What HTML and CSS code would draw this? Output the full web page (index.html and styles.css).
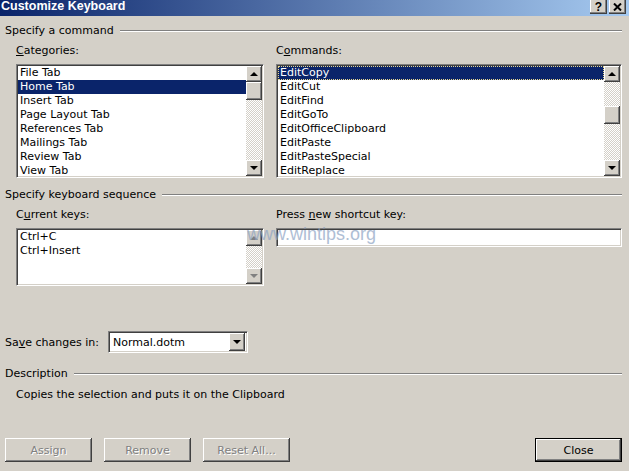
FILE: index.html
```html
<!DOCTYPE html>
<html lang="en">
<head>
    <meta charset="UTF-8">
    <title>Customize Keyboard</title>
    <link rel="stylesheet" href="styles.css">
</head>
<body>
    <div class="dialog">
        <div class="titlebar">
            <span class="title">Customize Keyboard</span>
            <div class="title-btns">
                <span class="tbtn help">?</span>
                <span class="tbtn">
                    <svg width="9" height="8" viewBox="0 0 9 8"><path d="M1 0.5 L8 7.5 M8 0.5 L1 7.5" stroke="#000" stroke-width="2"/></svg>
                </span>
            </div>
        </div>

        <div class="content">
            <div class="group-head"><span>Specify a command</span><i class="etch"></i></div>
            <div class="pair">
                <div class="col left">
                    <div class="label"><u>C</u>ategories:</div>
                    <div class="listbox tall">
                        <ul class="items">
                            <li>File Tab</li>
                            <li class="selected">Home Tab</li>
                            <li>Insert Tab</li>
                            <li>Page Layout Tab</li>
                            <li>References Tab</li>
                            <li>Mailings Tab</li>
                            <li>Review Tab</li>
                            <li>View Tab</li>
                        </ul>
                        <div class="vscroll">
                            <span class="sbtn"><i class="arrow up"></i></span>
                            <span class="thumb"></span>
                            <span class="track"></span>
                            <span class="sbtn"><i class="arrow down"></i></span>
                        </div>
                    </div>
                </div>
                <div class="col right">
                    <div class="label">C<u>o</u>mmands:</div>
                    <div class="listbox tall">
                        <ul class="items">
                            <li class="selected focused">EditCopy</li>
                            <li>EditCut</li>
                            <li>EditFind</li>
                            <li>EditGoTo</li>
                            <li>EditOfficeClipboard</li>
                            <li>EditPaste</li>
                            <li>EditPasteSpecial</li>
                            <li>EditReplace</li>
                        </ul>
                        <div class="vscroll">
                            <span class="sbtn"><i class="arrow up"></i></span>
                            <span class="track short"></span>
                            <span class="thumb"></span>
                            <span class="track"></span>
                            <span class="sbtn"><i class="arrow down"></i></span>
                        </div>
                    </div>
                </div>
            </div>

            <div class="group-head second"><span>Specify keyboard sequence</span><i class="etch"></i></div>
            <div class="pair">
                <div class="col left">
                    <div class="label">C<u>u</u>rrent keys:</div>
                    <div class="listbox keys">
                        <ul class="items">
                            <li>Ctrl+C</li>
                            <li>Ctrl+Insert</li>
                        </ul>
                        <div class="vscroll">
                            <span class="sbtn"><i class="arrow up off"></i></span>
                            <span class="track"></span>
                            <span class="sbtn"><i class="arrow down off"></i></span>
                        </div>
                    </div>
                </div>
                <div class="col right">
                    <div class="label">Press <u>n</u>ew shortcut key:</div>
                    <div class="textbox"></div>
                </div>
            </div>

            <div class="save-row">
                <span class="save-label">Sa<u>v</u>e changes in:</span>
                <div class="combo">
                    <span class="combo-text">Normal.dotm</span>
                    <span class="sbtn"><i class="arrow down"></i></span>
                </div>
            </div>

            <div class="group-head third"><span>Description</span><i class="etch"></i></div>
            <p class="desc">Copies the selection and puts it on the Clipboard</p>

            <div class="buttons">
                <span class="btn disabled">Assign</span>
                <span class="btn disabled">Remove</span>
                <span class="btn disabled">Reset All...</span>
                <span class="spacer"></span>
                <span class="btn default">Close</span>
            </div>
        </div>

        <div class="watermark">www.wintips.org</div>
    </div>
</body>
</html>
```

FILE: styles.css
```css
* {
    margin: 0;
    padding: 0;
    box-sizing: border-box;
}

body {
    background: #d4d0c8;
    font-family: 'DejaVu Sans', Verdana, sans-serif;
    font-size: 11px;
    color: #000;
}

.dialog {
    position: relative;
    width: 629px;
    height: 471px;
    display: flex;
    flex-direction: column;
    overflow: hidden;
}

/* title bar */
.titlebar {
    height: 16px;
    display: flex;
    align-items: flex-start;
    justify-content: space-between;
    background: linear-gradient(to right, #0a246a, #a6caf0);
    color: white;
    padding-left: 1px;
}

.title {
    font-family: 'Liberation Sans', Arial, sans-serif;
    font-weight: bold;
    font-size: 12.5px;
    line-height: 12px;
}

.title-btns {
    display: flex;
    gap: 2px;
    margin-right: 3px;
}

.tbtn {
    width: 17px;
    height: 14px;
    display: flex;
    align-items: center;
    justify-content: center;
    background: #d4d0c8;
    color: #000;
    box-shadow: inset -1px -1px #404040, inset -2px -2px #808080, inset 1px 0 #fff;
}

.tbtn.help {
    font-family: 'Liberation Sans', Arial, sans-serif;
    font-weight: bold;
    font-size: 12px;
    line-height: 12px;
}

.tbtn svg {
    display: block;
}

/* content */
.content {
    flex: 1;
    display: flex;
    flex-direction: column;
    padding: 8px 7px 9px 5px;
}

.group-head {
    display: flex;
    align-items: center;
    gap: 6px;
    line-height: 14px;
}

.group-head.second {
    margin-top: 10px;
}

.group-head.third {
    margin-top: 14px;
}

.etch {
    flex: 1;
    height: 2px;
    border-top: 1px solid #808080;
    border-bottom: 1px solid #fff;
}

.pair {
    display: flex;
    gap: 12px;
    padding-left: 11px;
    margin-top: 6px;
}

.col.left {
    width: 248px;
}

.col.right {
    flex: 1;
}

.label {
    line-height: 14px;
    margin-bottom: 6px;
}

/* list boxes */
.listbox {
    display: flex;
    background: white;
    border: 1px solid;
    border-color: #808080 #fff #fff #808080;
    box-shadow: inset 1px 1px #404040, inset -1px -1px #d4d0c8;
    padding: 1px;
}

.listbox.tall {
    height: 114px;
}

.listbox.keys {
    height: 58px;
}

.items {
    flex: 1;
    list-style: none;
}

.items li {
    height: 14px;
    line-height: 14px;
    padding-left: 2px;
    white-space: nowrap;
}

.items li.selected {
    background: #0a246a;
    color: white;
}

.items li.focused {
    outline: 1px dotted #e8d890;
    outline-offset: -1px;
}

.vscroll {
    width: 16px;
    display: flex;
    flex-direction: column;
}

.sbtn,
.thumb {
    width: 16px;
    height: 16px;
    flex-shrink: 0;
    display: flex;
    align-items: center;
    justify-content: center;
    background: #d4d0c8;
    box-shadow: inset -1px -1px #404040, inset 1px 1px #fff, inset -2px -2px #808080;
}

.thumb {
    height: 18px;
}

.track {
    flex: 1;
    background-color: #fff;
    background-image: repeating-conic-gradient(#d4d0c8 0 25%, #fff 0 50%);
    background-size: 2px 2px;
}

.track.short {
    flex: 0 0 24px;
}

.arrow {
    width: 0;
    height: 0;
    border-left: 4px solid transparent;
    border-right: 4px solid transparent;
}

.arrow.up {
    border-bottom: 4px solid #000;
}

.arrow.down {
    border-top: 4px solid #000;
}

.arrow.up.off {
    border-bottom-color: #808080;
}

.arrow.down.off {
    border-top-color: #808080;
}

.textbox {
    height: 19px;
    background: white;
    border: 1px solid;
    border-color: #808080 #fff #fff #808080;
    box-shadow: inset 1px 1px #404040, inset -1px -1px #d4d0c8;
}

/* save row */
.save-row {
    display: flex;
    align-items: center;
    margin-top: 45px;
}

.save-label {
    width: 103px;
}

.combo {
    width: 140px;
    height: 22px;
    display: flex;
    align-items: center;
    background: white;
    border: 1px solid;
    border-color: #808080 #fff #fff #808080;
    box-shadow: inset 1px 1px #404040, inset -1px -1px #d4d0c8;
    padding: 2px;
}

.combo-text {
    flex: 1;
    padding-left: 2px;
}

.combo .sbtn {
    height: 18px;
}

.desc {
    margin-top: 7px;
    padding-left: 11px;
    line-height: 14px;
}

/* buttons */
.buttons {
    margin-top: auto;
    display: flex;
    gap: 12px;
}

.spacer {
    flex: 1;
}

.btn {
    width: 87px;
    height: 24px;
    display: flex;
    align-items: center;
    justify-content: center;
    background: #d4d0c8;
    box-shadow: inset -1px -1px #404040, inset 1px 1px #fff, inset -2px -2px #808080;
}

.btn.disabled {
    color: #808080;
    text-shadow: 1px 1px #fff;
}

.btn.default {
    border: 1px solid #000;
}

.watermark {
    position: absolute;
    left: 247px;
    top: 224px;
    font-family: 'Liberation Sans', Arial, sans-serif;
    font-size: 18px;
    color: #8ea4c4;
    opacity: 0.7;
    pointer-events: none;
}
```
